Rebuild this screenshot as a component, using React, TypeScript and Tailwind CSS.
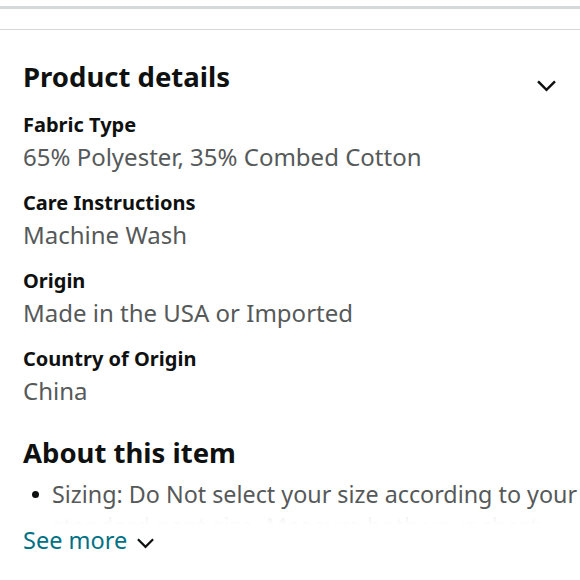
import React from 'react'

const details = [
  { label: 'Fabric Type', value: '65% Polyester, 35% Combed Cotton' },
  { label: 'Care Instructions', value: 'Machine Wash' },
  { label: 'Origin', value: 'Made in the USA or Imported' },
  { label: 'Country of Origin', value: 'China' },
]

function Chevron({ className = '' }: { className?: string }) {
  return (
    <svg viewBox="0 0 20 12" className={className} fill="none" stroke="currentColor" strokeWidth="2.6" strokeLinecap="square">
      <path d="M2 2l8 8 8-8" />
    </svg>
  )
}

export default function App() {
  return (
    <div className="w-[580px] h-[580px] overflow-hidden bg-white font-['Noto_Sans',sans-serif] text-[#0f1111]">
      <div className="pt-[6px]">
        <div className="h-[3px] bg-[#d5d9d9]" />
        <div className="h-[20px]" />
        <div className="h-px bg-[#d5d9d9]" />
      </div>

      <div className="px-[23px] pt-[30px]">
        <div className="flex items-center justify-between">
          <h2 className="text-[27.5px] font-bold leading-[34px]">Product details</h2>
          <Chevron className="w-[19px] h-[12px] mr-[1px] mt-[18px]" />
        </div>

        <div className="mt-[16px] flex flex-col gap-[14px]">
          {details.map((d) => (
            <div key={d.label}>
              <div className="text-[20px] font-bold leading-[30px]">{d.label}</div>
              <div className="text-[24px] leading-[34px] text-[#565959]">{d.value}</div>
            </div>
          ))}
        </div>

        <h2 className="mt-[28px] text-[27.5px] font-bold leading-[34px]">About this item</h2>

        {/* clipped bullet list with fade */}
        <div className="relative mt-[8px] -mr-[23px] h-[47px] overflow-hidden">
          <ul className="text-[23.3px] leading-[32px] text-[#565959]">
            <li className="flex">
              <span className="w-[29px] shrink-0 flex items-center h-[32px] pl-[9px]">
                <span className="w-[7px] h-[7px] rounded-full bg-[#0f1111]" />
              </span>
              <span className="whitespace-nowrap">
                <span className="block">Sizing: Do Not select your size according to your</span>
                <span className="block">standard pant size. Measure both your chest</span>
              </span>
            </li>
          </ul>
          <div className="absolute left-0 right-0 bottom-0 h-[16px] bg-gradient-to-b from-white/85 to-white" />
        </div>

        <div className="flex items-center gap-[10px]">
          <span className="text-[23.5px] leading-[30px] text-[#007185]">See more</span>
          <Chevron className="w-[17px] h-[11px] mt-[6px] text-[#0f1111]" />
        </div>
      </div>
    </div>
  )
}
